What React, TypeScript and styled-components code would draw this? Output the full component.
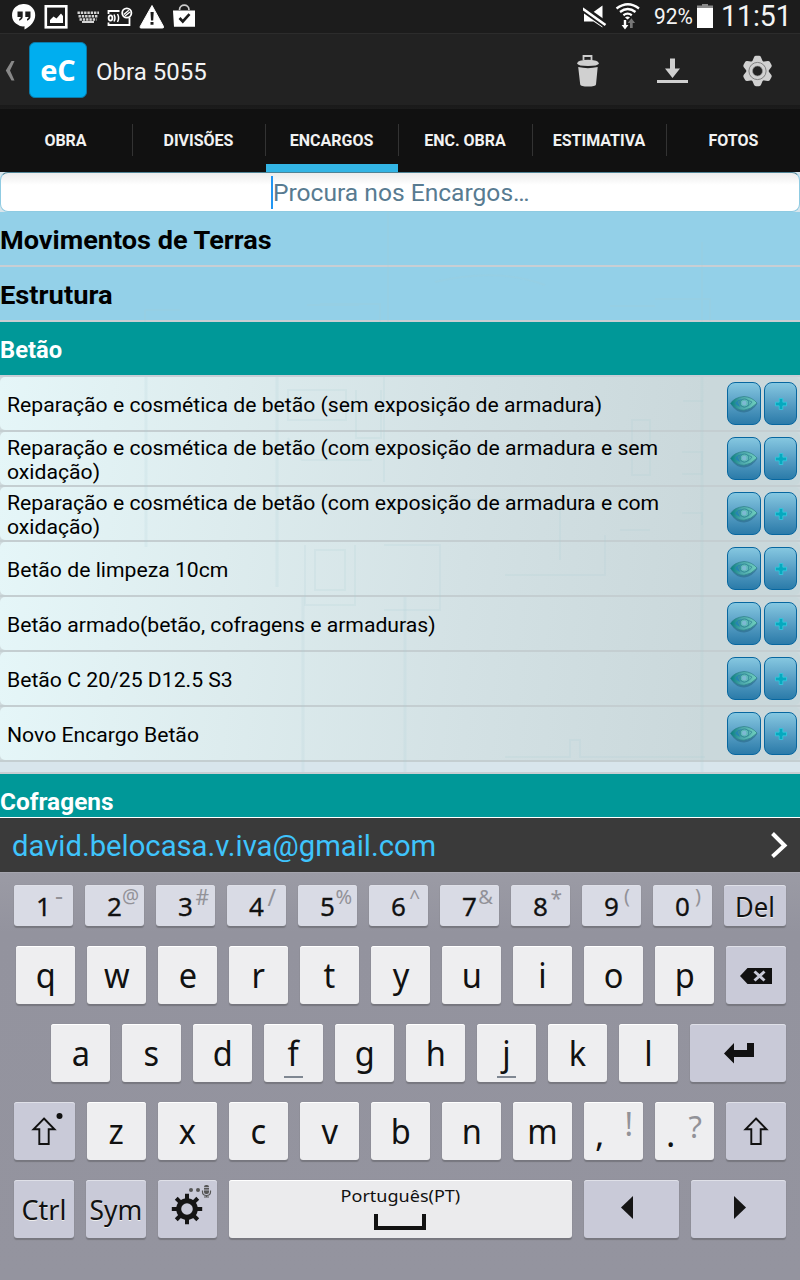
import React from "react";
import styled, { createGlobalStyle } from "styled-components";

const GlobalStyle = createGlobalStyle`
  * { box-sizing: border-box; }
  body { margin: 0; background: #000; }
`;

const Screen = styled.div`
  width: 800px;
  height: 1280px;
  display: flex;
  flex-direction: column;
  overflow: hidden;
  font-family: Roboto, "Liberation Sans", sans-serif;
  color: #000;
`;

const Fit = styled.span<{ $x?: number; $origin?: string; $dy?: number }>`
  display: inline-block;
  white-space: nowrap;
  transform-origin: ${(p) => p.$origin ?? "left"} center;
  transform: translateY(${(p) => p.$dy ?? 0}px) scaleX(${(p) => p.$x ?? 1});
`;

/* ---------- Status bar ---------- */

const StatusBar = styled.header`
  flex: none;
  height: 34px;
  background: #1c1c1c;
  border-bottom: 1px solid #2c2c2c;
  display: flex;
  justify-content: space-between;
`;

const StatusIcons = styled.svg`
  display: block;
  flex: none;
`;

const StatusRight = styled.div`
  display: flex;
  align-items: center;
  color: #f4f4f4;
`;

const BatteryLevel = styled.span`
  width: 43px;
  font-size: 22px;
  line-height: 34px;
  padding-top: 1px;
`;

const Clock = styled.span`
  width: 79px;
  font-size: 29px;
  line-height: 33px;
`;

/* ---------- Action bar ---------- */

const ActionBar = styled.div`
  flex: none;
  height: 75px;
  background: linear-gradient(#222 0, #222 71px, #1a1a1a 71px, #1c1c1c 75px);
  display: flex;
  align-items: flex-start;
`;

const UpArrow = styled.svg`
  margin: 27px 0 0 5px;
`;

const AppLogo = styled.div`
  width: 58px;
  height: 56px;
  margin: 8px 0 0 13px;
  border-radius: 6px;
  border: 1px solid #0a7cab;
  background: #00aeef;
  color: #fff;
  font: bold 29px/54px "Open Sans", "Noto Sans", sans-serif;
  text-align: center;
`;

const ActionTitle = styled.h1`
  flex: 1;
  margin: 0 0 0 9px;
  font-size: 24px;
  font-weight: 400;
  line-height: 76px;
  color: #f3f3f3;
`;

const ActionButtons = styled.div`
  display: grid;
  grid-template-columns: 81px 85px 30px;
  margin: 21px 28px 0 0;
`;

/* ---------- Tabs ---------- */

const Tabs = styled.nav`
  flex: none;
  height: 63px;
  background: #111;
  display: grid;
  grid-template-columns: 133px 133px 133px 134px 134px 133px;
`;

const Tab = styled.div<{ $active?: boolean }>`
  position: relative;
  display: flex;
  align-items: center;
  justify-content: center;
  font-size: 16px;
  font-weight: 700;
  color: #f2f2f2;
  padding-right: 2px;
  background: linear-gradient(#333, #333) right 15px / 1px 32px no-repeat;
  &:last-child { background: none; padding: 0; }
  ${(p) =>
    p.$active &&
    `&::after {
      content: "";
      position: absolute;
      left: 0; right: 1px; bottom: 0;
      height: 8px;
      background: #33b5e5;
    }`}
`;

/* ---------- List ---------- */

const Content = styled.main`
  flex: none;
  height: 646px;
  position: relative;
  overflow: hidden;
  background: #d8e5ec;
  border-bottom: 1px solid #fff;
`;

const Blueprint = styled.svg`
  position: absolute;
  inset: 0;
  pointer-events: none;
`;

const SearchField = styled.div`
  position: relative;
  z-index: 1;
  height: 40px;
  border: 1px solid #8fcbe2;
  border-top-color: #4f8496;
  border-radius: 8px;
  background: linear-gradient(#ececec, #fff 12px);
  display: flex;
  justify-content: center;
  align-items: center;
`;

const Caret = styled.i`
  width: 2px;
  height: 33px;
  background: #2196f3;
`;

const Placeholder = styled.span`
  width: 257px;
  font-size: 24px;
  line-height: 36px;
  color: #587b91;
`;

const Group = styled.div`
  height: 55px;
  border-bottom: 2px solid #c9ced3;
  background: #93d0e8;
  font-size: 26.500px;
  font-weight: 700;
  line-height: 54px;
`;

const Section = styled.div`
  position: relative;
  z-index: 1;
  height: 55px;
  border-bottom: 2px solid #c9ced6;
  background: #009898;
  color: #fff;
  font-size: 23.500px;
  font-weight: 700;
  line-height: 55px;
`;

const Row = styled.div`
  height: 55px;
  border-bottom: 2px solid #c4ced1;
  background: #cfdadd;
`;

const RowBody = styled.div`
  height: 53px;
  display: flex;
  align-items: center;
  gap: 3px;
  padding: 0 3px 0 7px;
  border-radius: 5px;
  background: linear-gradient(97deg, #e5f6f8 0%, #ddecee 28%, #d3e1e4 58%, #cad8db 88%, #c9d8db 100%);
`;

const RowLabel = styled.div`
  flex: 1;
  position: relative;
  z-index: 1;
  font-size: 21px;
  line-height: 24px;
  padding-top: 2px;
`;

const RowButton = styled.button<{ $w: number }>`
  position: relative;
  z-index: 1;
  width: ${(p) => p.$w}px;
  height: 43px;
  margin: 0;
  padding: 0;
  border: 1px solid #0767a0;
  border-radius: 8px;
  background: linear-gradient(#85c7e0, #589fc5 50%, #2b7ba9);
  display: flex;
  align-items: center;
  justify-content: center;
`;

const ListGap = styled.div`
  height: 12px;
  border-bottom: 2px solid #c9ced3;
`;

/* ---------- Account strip ---------- */

const AccountBar = styled.div`
  flex: none;
  height: 54px;
  background: #3a3a3a;
  display: flex;
  align-items: center;
  justify-content: space-between;
  padding: 0 12px;
  font-size: 29px;
  color: #3fc4fc;
`;

/* ---------- Keyboard ---------- */

const Keyboard = styled.section`
  flex: 1;
  padding: 12px 14px 0;
  border-top: 1px solid #a5a5ae;
  background: linear-gradient(#9b9ba5, #93939e 60px, #94949f);
  display: flex;
  flex-direction: column;
  gap: 20px;
  font-family: "Noto Sans", sans-serif;
  color: #111;
`;

const KeyRow = styled.div<{ $indent?: number; $h?: number }>`
  display: flex;
  gap: 12px;
  height: ${(p) => p.$h ?? 58}px;
  padding-left: ${(p) => p.$indent ?? 0}px;
`;

const Key = styled.div<{ $w?: number; $tone?: "light" | "number" | "dark" }>`
  position: relative;
  flex: none;
  width: ${(p) => p.$w ?? 59}px;
  border-radius: 3px;
  background: ${(p) =>
    p.$tone === "dark" ? "#c9cad8" : p.$tone === "number" ? "#d9dbe5" : "#eeeef0"};
  box-shadow: 0 2px 1px #77777f, 0 0 1px #84848e,
    inset 0 1px 0 ${(p) => (p.$tone === "dark" || p.$tone === "number" ? "#dfe0e8" : "#fff")};
  display: flex;
  align-items: center;
  justify-content: center;
`;

const Letter = styled.span`
  font-size: 35px;
  line-height: 58px;
  transform: scaleX(0.93);
`;

const Digit = styled.span`
  font-size: 26px;
  line-height: 41px;
  padding-top: 2px;
  -webkit-text-stroke: 0.3px #111;
`;

const KeyWord = styled.span`
  font-size: 27px;
  line-height: 41px;
  text-shadow: 0 1px 0 #eee;
`;

const Hint = styled.span<{ $size?: number; $top?: number; $right?: number }>`
  position: absolute;
  right: ${(p) => p.$right ?? 5}px;
  top: ${(p) => p.$top ?? 1}px;
  font-size: ${(p) => p.$size ?? 19}px;
  line-height: 22px;
  color: #929298;
`;

const HomeMark = styled.i`
  position: absolute;
  left: 20px;
  bottom: 4px;
  width: 19px;
  height: 2px;
  background: #7f8792;
`;

const Punct = styled.span`
  position: absolute;
  left: 11px;
  top: 3px;
  font-size: 35px;
  line-height: 58px;
`;

const SpaceKey = styled(Key)`
  flex-direction: column;
  justify-content: flex-start;
  background: #ebebed;
`;

const Language = styled.span`
  font-size: 17px;
  line-height: 20px;
  margin-top: 6px;
`;

const SpaceGlyph = styled.i`
  width: 52px;
  height: 16px;
  margin: 8px 1px 0 0;
  border: 4px solid #111;
  border-top: 0;
`;

const KeyIcon = styled.svg`
  position: absolute;
  inset: 0;
`;

const tabs: { label: string; active?: boolean }[] = [
  { label: "OBRA" },
  { label: "DIVISÕES" },
  { label: "ENCARGOS", active: true },
  { label: "ENC. OBRA" },
  { label: "ESTIMATIVA" },
  { label: "FOTOS" },
];

const items: string[][] = [
  ["Reparação e cosmética de betão (sem exposição de armadura)"],
  ["Reparação e cosmética de betão (com exposição de armadura e sem", "oxidação)"],
  ["Reparação e cosmética de betão (com exposição de armadura e com", "oxidação)"],
  ["Betão de limpeza 10cm"],
  ["Betão armado(betão, cofragens e armaduras)"],
  ["Betão C 20/25 D12.5 S3"],
  ["Novo Encargo Betão"],
];

const digits: [string, string, number, number, number][] = [
  ["1", "-", 25, -1, 10],
  ["2", "@", 19, 0, 5],
  ["3", "#", 21, 1, 6],
  ["4", "/", 23, 1, 10],
  ["5", "%", 20, 1, 5],
  ["6", "^", 19, 1, 8],
  ["7", "&", 20, 1, 6],
  ["8", "*", 21, 2, 8],
  ["9", "(", 20, 0, 11],
  ["0", ")", 20, 0, 11],
];

function gearPath(cx: number, cy: number, outer: number, inner: number, half: number) {
  let d = "";
  for (let i = 0; i < 8; i++) {
    const a = (i * Math.PI) / 4;
    const ux = Math.cos(a), uy = Math.sin(a);
    const pts = [
      [inner, -half], [outer, -half], [outer, half], [inner, half],
    ].map(([r, t]) => `${(cx + ux * r - uy * t).toFixed(1)} ${(cy + uy * r + ux * t).toFixed(1)}`);
    d += `M${pts.join("L")}Z`;
  }
  return d;
}

const NotificationIcons = () => (
  <StatusIcons width="210" height="33" viewBox="0 0 210 33">
    <path d="M24 4a11.200 11.200 0 0 1 11.200 11.200c0 6-4.500 11.200-10.700 14.300v-3.200A11.200 11.200 0 1 1 24 4Z" fill="#fff" />
    <path d="M17.500 11.500h5.200v5c0 2-1.200 3.500-3.500 4.200v-1.800c1-.4 1.500-1 1.600-1.900h-3.300ZM25.300 11.500h5.200v5c0 2-1.200 3.500-3.500 4.200v-1.800c1-.4 1.500-1 1.600-1.900h-3.300Z" fill="#1c1c1c" />
    <rect x="45.800" y="6.300" width="20.500" height="21" fill="none" stroke="#fff" strokeWidth="2.600" />
    <path d="M50 23v-3l3.500-3.500 3 2 4.500-5 2 2.500v7Z" fill="#fff" />
    <g stroke="#d4d4d4" strokeWidth="2.500" strokeDasharray="2.400 .9">
      <path d="M77.500 12.700h21.500M78.500 16.200h19.500M79.500 19.500h17" />
    </g>
    <path d="M82 22h12" stroke="#d4d4d4" strokeWidth="2" />
    <g fill="none" stroke="#fff" strokeWidth="1.800">
      <path d="M108.500 14v-3h11M108.500 22.500v2.500h21v-7.500" />
      <ellipse cx="110.500" cy="18" rx="1.900" ry="2.600" />
      <path d="M114 14.500q2 3.500 0 7M117.500 14q2.200 4 0 8" strokeWidth="1.500" />
      <circle cx="126.800" cy="13" r="4.600" />
      <path d="M123.800 14.500l5-4.200M125 16l5-4" strokeWidth="1.400" />
    </g>
    <path d="M152 5.500L163.500 26.500Q164 28 162.500 28H141Q139.500 28 140.200 26.500Z" fill="#fff" stroke="#fff" strokeLinejoin="round" />
    <path d="M150.500 12h3.200l-.5 8.500h-2.200ZM150.500 22h3v2.800h-3Z" fill="#1c1c1c" />
    <path d="M173 10.500h22v16.300h-21Z" fill="#fff" />
    <path d="M179.500 10c0-6.500 9.500-6.500 9.500 0" fill="none" stroke="#ccc" strokeWidth="1.700" />
    <path d="M179.500 18l3.300 3.500 6.700-7.300" fill="none" stroke="#1c1c1c" strokeWidth="2.600" />
  </StatusIcons>
);

const SystemIcons = () => (
  <StatusIcons width="71" height="33" viewBox="0 0 71 33">
    <path d="M1 12h9.500l9-6.500v22l-9-6H1Z" fill="#fff" />
    <path d="M-.5 8l23 16.500" stroke="#1c1c1c" strokeWidth="7" />
    <path d="M-.5 8.500l23 16.500" stroke="#fff" strokeWidth="2.600" />
    <g fill="none" stroke="#fff" strokeWidth="2.300">
      <path d="M33.500 8.500q11.500-8.500 22.500 0M37 12q7.800-6 15.500 0M40.400 15.200q4.200-3 8.400 0" />
    </g>
    <path d="M42 17.500q2.500-1.800 5 0l-2.500 2Z" fill="#fff" />
    <path d="M40.800 20h2.400v5h2.200l-3.400 4.500-3.400-4.500h2.200Z" fill="#fff" />
    <path d="M47 28h2.700v-5h2.400l-3.700-4.700-3.700 4.700h2.300Z" fill="#777" />
  </StatusIcons>
);

const BatteryIcon = () => (
  <StatusIcons width="24" height="33" viewBox="0 0 24 33">
    <path d="M0 8V5.500h5V4h6v1.500h5V8Z" fill="#8a8a8a" />
    <rect y="8" width="16" height="20" fill="#fff" />
  </StatusIcons>
);

const TrashIcon = () => (
  <svg width="24" height="33" viewBox="0 0 24 33">
    <path d="M7.500 5V1h8v4" fill="none" stroke="#ccc" strokeWidth="1.800" />
    <path d="M1 8.500Q1.500 6.500 4 5.700Q12 4 20 5.700Q22.300 6.500 23 8.500Q22 11 12 11Q2 11 1 8.500Z" fill="#d0d0d0" />
    <path d="M2.200 12Q12 14.300 21.700 12L20 29.500Q19.500 31.500 12 31.500Q4.700 31.500 4.200 29.500Z" fill="#d0d0d0" />
  </svg>
);

const DownloadIcon = () => (
  <svg width="31" height="33" viewBox="0 0 31 33">
    <path d="M13 3.500h5v10h5L15.500 23 8 13.500h5Z" fill="#d0d0d0" />
    <rect y="25" width="31" height="3" fill="#d0d0d0" />
  </svg>
);

const SettingsIcon = () => (
  <svg width="30" height="33" viewBox="0 0 30 33">
    <g fill="#d0d0d0">
      <circle cx="15.500" cy="16" r="11" />
      {[0, 60, 120, 180, 240, 300].map((a) => (
        <path key={a} d="M10 7L12 2.200Q12.500.8 14 .8h3Q18.500.8 19 2.200L21 7Z" transform={`rotate(${a} 15.500 16)`} />
      ))}
    </g>
    <circle cx="15.500" cy="16" r="8.600" fill="none" stroke="#777" strokeWidth=".9" />
    <circle cx="15.500" cy="16" r="5" fill="#222" stroke="#999" strokeWidth=".6" />
  </svg>
);

const EyeIcon = () => (
  <svg width="28" height="20" viewBox="0 0 28 20">
    <defs>
      <linearGradient id="eye" x1="0" x2="1">
        <stop offset="0" stopColor="#067f80" />
        <stop offset=".4" stopColor="#4aa5aa" />
        <stop offset="1" stopColor="#6fcfbe" />
      </linearGradient>
    </defs>
    <path d="M1 10.500Q13 1 27.500 9.500Q22 18 14 18.500Q6 18.500 1 10.500Z" fill="#2d6f8f" opacity=".7" />
    <path d="M.5 9.500Q4 3.500 14 2.500Q22 3 27 9Q21 15.500 14 16.200Q6 16.500.5 9.500Z" fill="url(#eye)" stroke="#2c7f86" strokeWidth=".7" />
    <path d="M5 9Q8 5.500 12 5Q8 8 10 13Q6.500 11.500 5 9Z" fill="#2683b1" />
    <path d="M8 8Q14 3.500 22 8Q20 12.500 14 13Q9 12.500 8 8Z" fill="none" stroke="#3d949c" strokeWidth="1" />
    <ellipse cx="14.500" cy="9" rx="4.300" ry="4" fill="#5eb8b6" stroke="#2f8794" strokeWidth=".9" />
    <ellipse cx="14.200" cy="9" rx="2.300" ry="2.200" fill="#7db9d2" />
  </svg>
);

const PlusIcon = () => (
  <svg width="12" height="12" viewBox="0 0 12 12">
    <path d="M4.200.5h3.600v3.700h3.700v3.600H7.800v3.700H4.200V7.800H.5V4.200h3.700Z" fill="#06a9bf" stroke="#35cade" strokeWidth=".8" />
  </svg>
);

const ShiftIcon = ({ x }: { x: number }) => (
  <KeyIcon width="60" height="58" viewBox="0 0 60 58">
    <path d={`M${x} 16.500l10.500 10.800h-5.800v14.700h-9.400V27.300h-5.800Z`} fill="none" stroke="#111" strokeWidth="1.900" />
  </KeyIcon>
);

const LetterKey = ({ c }: { c: string }) => (
  <Key>
    <Letter>{c}</Letter>
    {(c === "f" || c === "j") && <HomeMark />}
  </Key>
);

export default function App() {
  return (
    <Screen>
      <GlobalStyle />
      <StatusBar>
        <NotificationIcons />
        <StatusRight>
          <SystemIcons />
          <BatteryLevel><Fit $x={0.95}>92%</Fit></BatteryLevel>
          <BatteryIcon />
          <Clock><Fit $x={0.98}>11:51</Fit></Clock>
        </StatusRight>
      </StatusBar>

      <ActionBar>
        <UpArrow width="11" height="20" viewBox="0 0 11 20">
          <path d="M6.500 0h3L5 9.500 9.500 19.500h-3L.8 9.500Z" fill="#888" />
        </UpArrow>
        <AppLogo>eC</AppLogo>
        <ActionTitle>Obra 5055</ActionTitle>
        <ActionButtons>
          <TrashIcon />
          <DownloadIcon />
          <SettingsIcon />
        </ActionButtons>
      </ActionBar>

      <Tabs>
        {tabs.map((t) => (
          <Tab key={t.label} $active={t.active}>{t.label}</Tab>
        ))}
      </Tabs>

      <Content>
        <SearchField>
          <Caret />
          <Placeholder><Fit $x={1.024} $dy={1}>Procura nos Encargos…</Fit></Placeholder>
        </SearchField>
        <Group><Fit $x={1.022} $dy={1}>Movimentos de Terras</Fit></Group>
        <Group><Fit $x={1.03} $dy={1}>Estrutura</Fit></Group>
        <Section><Fit $x={1.01} $dy={1}>Betão</Fit></Section>
        {items.map((lines, i) => (
          <Row key={i}>
            <RowBody>
              <RowLabel>
                {lines.map((l) => <div key={l}><Fit $x={1.0085}>{l}</Fit></div>)}
              </RowLabel>
              <RowButton $w={34} aria-label="Ver"><EyeIcon /></RowButton>
              <RowButton $w={33} aria-label="Adicionar"><PlusIcon /></RowButton>
            </RowBody>
          </Row>
        ))}
        <ListGap />
        <Section><Fit $x={1.04} $dy={1}>Cofragens</Fit></Section>
        <Blueprint width="800" height="602" viewBox="0 172 800 602">
          <g fill="none" stroke="#a9cfd6" strokeOpacity=".16">
            <path d="M145 310h35M145 310v12M320 304h60v18M388 212v165M307 305h52" strokeWidth="2" />
            <path d="M702 242v80M610 306h45M655 299h55v22M435 282q60-15 110 3" strokeWidth="2" />
            <path d="M146 377v170M277 377v210M303 597v175M405 597v175M702 377v395" strokeWidth="3" />
            <path d="M288 390h58v30h-58ZM356 390v48h25v-48M288 438l14 22h70M305 545v60h50v-60M315 550h30v40h-30ZM384 377v105M384 545h56v65h-56" strokeWidth="2" />
            <path d="M632 420h18v55h-18ZM682 452h20v22h-20M682 513h20v12M620 530h30M683 401h20M505 757h65v-17h10v17h45M625 757h80M505 575h100v-40M440 500h120v60" strokeWidth="2" />
          </g>
        </Blueprint>
      </Content>

      <AccountBar>
        <Fit $x={1.008} $dy={1}>david.belocasa.v.iva@gmail.com</Fit>
        <svg width="18" height="28" viewBox="0 0 18 28">
          <path d="M2.500 2.500L14.500 14.500 2.500 25.500" fill="none" stroke="#fff" strokeWidth="4" />
        </svg>
      </AccountBar>

      <Keyboard>
        <KeyRow $h={41}>
          {digits.map(([d, h, size, top, right]) => (
            <Key key={d} $tone="number">
              <Digit>{d}</Digit>
              <Hint $size={size} $top={top} $right={right}>{h}</Hint>
            </Key>
          ))}
          <Key $w={62} $tone="dark">
            <KeyWord><Fit $x={0.95} $origin="center" $dy={1}>Del</Fit></KeyWord>
          </Key>
        </KeyRow>

        <KeyRow $indent={2}>
          {[..."qwertyuiop"].map((c) => <LetterKey key={c} c={c} />)}
          <Key $w={60} $tone="dark">
            <KeyIcon width="60" height="58" viewBox="0 0 60 58">
              <path d="M14 30l7.500-8H46v16H21.500Z" fill="#111" />
              <path d="M28.500 25.500l10 9M38.500 25.500l-10 9" stroke="#c9cad8" strokeWidth="3" />
            </KeyIcon>
          </Key>
        </KeyRow>

        <KeyRow $indent={37}>
          {[..."asdfghjkl"].map((c) => <LetterKey key={c} c={c} />)}
          <Key $w={96} $tone="dark">
            <KeyIcon width="96" height="58" viewBox="0 0 96 58">
              <path d="M34 29.500l10-10.500v7h13v-7h7v14H44v6.500Z" fill="#111" />
            </KeyIcon>
          </Key>
        </KeyRow>

        <KeyRow>
          <Key $w={61} $tone="dark">
            <ShiftIcon x={30} />
            <KeyIcon width="61" height="58" viewBox="0 0 61 58">
              <circle cx="45.500" cy="14" r="3" fill="#111" />
            </KeyIcon>
          </Key>
          {[..."zxcvbnm"].map((c) => <LetterKey key={c} c={c} />)}
          <Key>
            <Punct>,</Punct>
            <Hint $size={32} $top={11} $right={10}>!</Hint>
          </Key>
          <Key>
            <Punct>.</Punct>
            <Hint $size={31} $top={13} $right={12}>?</Hint>
          </Key>
          <Key $w={60} $tone="dark"><ShiftIcon x={30} /></Key>
        </KeyRow>

        <KeyRow>
          <Key $w={60} $tone="dark"><KeyWord><Fit $origin="center">Ctrl</Fit></KeyWord></Key>
          <Key $w={60} $tone="dark"><KeyWord><Fit $origin="center" $x={0.98}>Sym</Fit></KeyWord></Key>
          <Key $tone="dark">
            <KeyIcon width="59" height="58" viewBox="0 0 59 58">
              <circle cx="29" cy="29" r="8.300" fill="none" stroke="#151515" strokeWidth="5" />
              <path d={gearPath(29, 29, 15.2, 9, 2)} fill="#151515" />
              <g fill="#555">
                <circle cx="33" cy="10" r="2" />
                <circle cx="40" cy="10" r="2" />
                <rect x="46" y="5" width="5" height="9" rx="2" />
              </g>
              <path d="M44.500 10.500v1.500q0 3.500 4 3.500t4-3.500v-1.500M48.500 15v1.500M46 17h5" fill="none" stroke="#555" strokeWidth="1.200" />
              <path d="M46 7.500h5M46 10h5" stroke="#c9cad8" strokeWidth=".8" />
            </KeyIcon>
          </Key>
          <SpaceKey $w={343}>
            <Language><Fit $origin="center" $x={1.06}>Português(PT)</Fit></Language>
            <SpaceGlyph />
          </SpaceKey>
          <Key $w={95} $tone="dark">
            <KeyIcon width="95" height="58" viewBox="0 0 95 58">
              <path d="M49 16v23L37 27.500Z" fill="#151515" />
            </KeyIcon>
          </Key>
          <Key $w={95} $tone="dark">
            <KeyIcon width="95" height="58" viewBox="0 0 95 58">
              <path d="M43 16v23L55 27.500Z" fill="#151515" />
            </KeyIcon>
          </Key>
        </KeyRow>
      </Keyboard>
    </Screen>
  );
}
